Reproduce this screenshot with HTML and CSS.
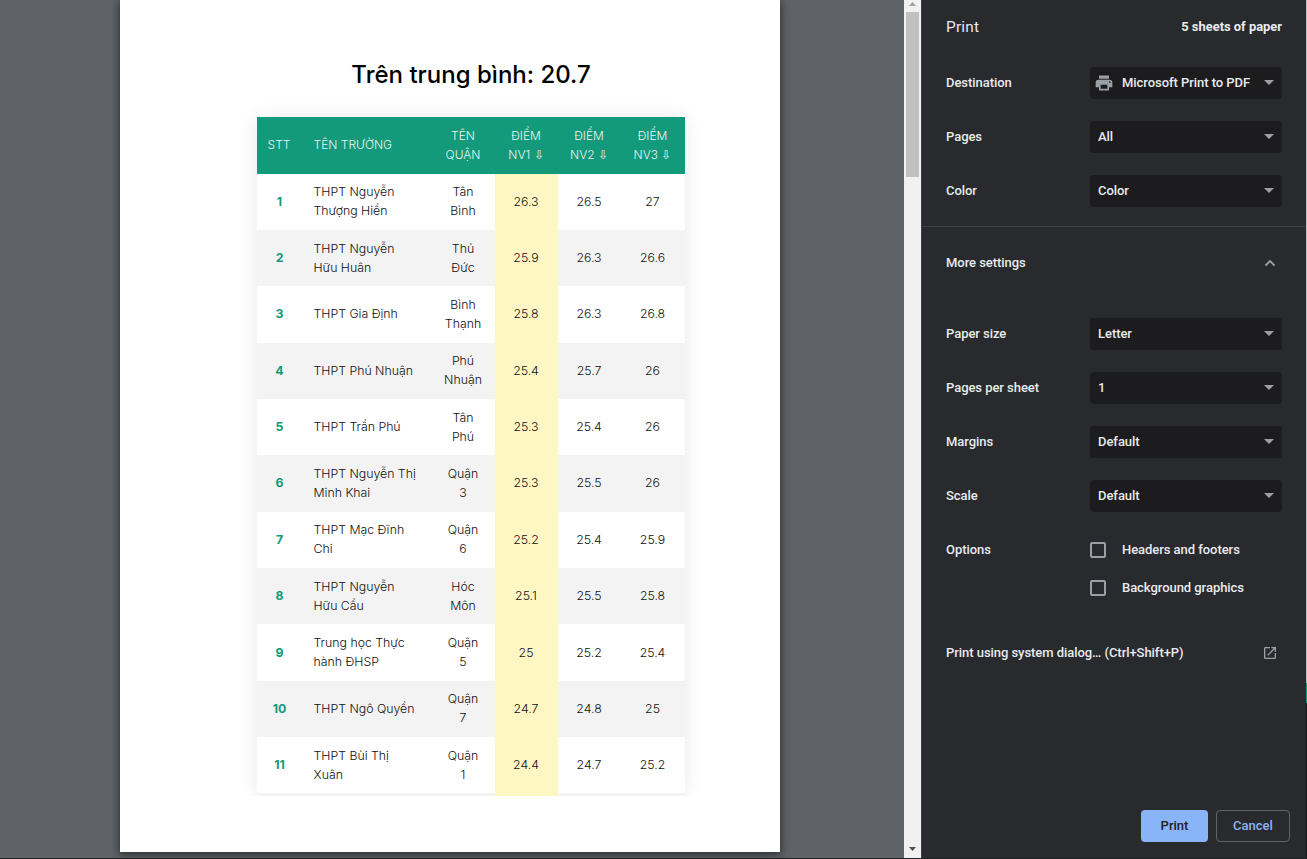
FILE: index.html
```html
<!DOCTYPE html>
<html lang="vi">
<head>
<meta charset="utf-8">
<title>Print</title>
<link rel="stylesheet" href="styles.css">
</head>
<body>
<div class="dialog">
  <main class="preview">
    <section class="paper">
      <h1 class="title">Trên trung bình: 20.7</h1>
      <div class="clip"><div class="table" id="table"></div></div>
    </section>
  </main>
  <div class="scrollbar">
    <svg class="arrow" width="17" height="11" viewBox="0 0 17 11"><path d="M5 6h7L8.500 2z" fill="#a3a3a3"/></svg>
    <div class="thumb"></div>
    <svg class="arrow down" width="17" height="17" viewBox="0 0 17 17"><path d="M5 6h7L8.500 10z" fill="#505050"/></svg>
  </div>
  <aside class="panel">
    <header class="head"><span class="head-title">Print</span><span class="sheets">5 sheets of paper</span></header>
    <div class="row"><span>Destination</span><div class="select dest"><svg width="20" height="20" viewBox="0 0 24 24"><path fill="#9aa0a6" d="M19 8H5c-1.660 0-3 1.340-3 3v6h4v4h12v-4h4v-6c0-1.660-1.340-3-3-3zm-3 11H8v-5h8v5zm3-7c-.55 0-1-.45-1-1s.45-1 1-1 1 .45 1 1-.45 1-1 1zm-1-9H6v4h12V3z"/></svg><span>Microsoft Print to PDF</span><i class="caret"></i></div></div>
    <div class="row"><span>Pages</span><div class="select"><span>All</span><i class="caret"></i></div></div>
    <div class="row"><span>Color</span><div class="select"><span>Color</span><i class="caret"></i></div></div>
    <div class="more"><span>More settings</span><svg width="24" height="24" viewBox="0 0 24 24"><path d="M7.500 14.500l4.500-4.500 4.500 4.500" fill="none" stroke="#9aa0a6" stroke-width="1.800"/></svg></div>
    <div class="row"><span>Paper size</span><div class="select"><span>Letter</span><i class="caret"></i></div></div>
    <div class="row"><span>Pages per sheet</span><div class="select"><span>1</span><i class="caret"></i></div></div>
    <div class="row"><span>Margins</span><div class="select"><span>Default</span><i class="caret"></i></div></div>
    <div class="row"><span>Scale</span><div class="select"><span>Default</span><i class="caret"></i></div></div>
    <div class="options"><span>Options</span><div class="checks">
      <label class="check"><i class="box"></i>Headers and footers</label>
      <label class="check"><i class="box"></i>Background graphics</label>
    </div></div>
    <div class="system"><span>Print using system dialog… (Ctrl+Shift+P)</span><svg width="16" height="16" viewBox="0 0 24 24"><path fill="#9aa0a6" d="M19 19H5V5h7V3H5c-1.110 0-2 .9-2 2v14c0 1.100.89 2 2 2h14c1.100 0 2-.9 2-2v-7h-2v7zM14 3v2h3.590l-9.830 9.830 1.410 1.410L19 6.410V10h2V3h-7z"/></svg></div>
    <footer class="actions"><button class="btn primary">Print</button><button class="btn">Cancel</button></footer>
  </aside>
  <div class="edge"><div class="edge-light"></div><div class="edge-green"></div></div>
</div>
<script src="table.js"></script>
</body>
</html>
```
FILE: styles.css
```css
* { box-sizing: border-box; }
body { margin: 0; height: 859px; overflow: hidden; background: #292a2d; }
.dialog { display: flex; height: 859px; border-bottom: 1px solid #202124; font: 500 13px/20px Roboto, sans-serif; letter-spacing: -0.05px; color: #e8eaed; }
.preview { width: 904px; padding-left: 120px; background: #5f6368; overflow: hidden; }
.paper { width: 660px; height: 852px; padding-top: 58px; background: #fff; color: #111; box-shadow: 0 2px 8px 1px rgba(32, 33, 36, .8); font-family: Inter, "Noto Sans", sans-serif; letter-spacing: 0; }
.title { margin: 0 0 25px; padding-left: 42px; text-align: center; font-size: 24px; line-height: 34px; font-weight: 500; color: #000; white-space: nowrap; }
.clip { margin-left: 137px; width: 428px; height: 679px; clip-path: inset(-25px -20px 0); }
.table { height: 679px; background: #f3f3f3; box-shadow: 0 0 18px rgba(0, 0, 0, .09); font-weight: 300; font-size: 12.3px; line-height: 19px; }
.tr { display: grid; grid-template-columns: 45px 130px 63px 63px 63px 64px; height: 56.36px; }
.tr:nth-child(even) { background: #fff; }
.tr.th { height: 56.5px; background: #129a7a; color: #e9f5f2; }
.td { display: flex; align-items: center; justify-content: center; text-align: center; white-space: nowrap; padding: 0 1px 1px 0; }
.th .td { font-size: 12px; }
.td.name { justify-content: flex-start; text-align: left; padding-left: 11.5px; }
.td.num { font-weight: 700; color: #129a7a; padding-right: 0; }
.td.hot { background: #fff7c3; }
.tail { display: grid; grid-template-columns: 238px 63px; height: 3px; }
.tail .td { grid-column: 2; }
.scrollbar { width: 17px; display: flex; flex-direction: column; background: #f1f1f1; }
.arrow { display: block; flex: none; }
.thumb { width: 13px; height: 165px; margin: 1px 0 0 2px; background: #c1c1c1; }
.down { margin-top: auto; }
.panel { width: 385px; border-left: 1px solid #3c4043; background: #292a2d; display: flex; flex-direction: column; }
.head { display: flex; justify-content: space-between; align-items: center; height: 56px; padding: 0 24px 2px; }
.head-title { font-size: 15.4px; font-weight: 400; letter-spacing: .2px; }
.sheets { font-weight: 700; font-size: 12.9px; letter-spacing: 0; }
.row { display: flex; align-items: center; justify-content: space-between; height: 54px; padding: 0 24px; }
.select { display: flex; align-items: center; width: 192px; height: 32px; padding: 0 8px; border-radius: 4px; background: #1c1c1e; white-space: nowrap; }
.dest { padding-left: 4px; }
.dest svg { margin-right: 8px; }
.caret { margin: 0 0 1px auto; border: 5px solid transparent; border-top-color: #9aa0a6; border-bottom: 0; }
.more { display: flex; align-items: center; justify-content: space-between; height: 73px; margin: 8px 0; padding: 0 24px; border-top: 1px solid #3c4043; }
.options { display: flex; padding: 17px 24px 0; }
.options > span { width: 144px; }
.checks { display: flex; flex-direction: column; gap: 18px; }
.check { display: flex; align-items: center; gap: 16px; }
.box { width: 16px; height: 16px; border: 2px solid #9aa0a6; border-radius: 2px; }
.system { display: flex; align-items: center; justify-content: space-between; margin-top: 45px; padding: 0 28px 0 24px; }
.system svg { margin-bottom: 1px; }
.actions { display: flex; justify-content: flex-end; gap: 8px; margin-top: auto; padding: 0 16px 16px; }
.btn { width: 74px; height: 32px; padding: 0 0 2px; border: 1px solid #5f6368; border-radius: 4px; background: transparent; color: #8ab4f8; font: 500 13px Roboto, sans-serif; }
.btn.primary { width: 67px; border: 0; background: #8ab4f8; color: #202124; }
.edge { width: 1px; background: #151719; }
.edge-light { height: 683px; background: #b8babc; }
.edge-green { height: 20px; background: #129a7a; }
```
FILE: table.js
```js
const schools = [
  ["THPT Nguyễn<br>Thượng Hiền", "Tân<br>Bình", 26.3, 26.5, 27],
  ["THPT Nguyễn<br>Hữu Huân", "Thủ<br>Đức", 25.9, 26.3, 26.6],
  ["THPT Gia Định", "Bình<br>Thạnh", 25.8, 26.3, 26.8],
  ["THPT Phú Nhuận", "Phú<br>Nhuận", 25.4, 25.7, 26],
  ["THPT Trần Phú", "Tân<br>Phú", 25.3, 25.4, 26],
  ["THPT Nguyễn Thị<br>Minh Khai", "Quận<br>3", 25.3, 25.5, 26],
  ["THPT Mạc Đĩnh<br>Chi", "Quận<br>6", 25.2, 25.4, 25.9],
  ["THPT Nguyễn<br>Hữu Cầu", "Hóc<br>Môn", 25.1, 25.5, 25.8],
  ["Trung học Thực<br>hành ĐHSP", "Quận<br>5", 25, 25.2, 25.4],
  ["THPT Ngô Quyền", "Quận<br>7", 24.7, 24.8, 25],
  ["THPT Bùi Thị<br>Xuân", "Quận<br>1", 24.4, 24.7, 25.2]
];
const row = (cells, head) => `<div class="tr${head ? " th" : ""}">` + cells.map((c, i) =>
  `<div class="td${i === 1 ? " name" : ""}${!head && i === 0 ? " num" : ""}${!head && i === 3 ? " hot" : ""}"><span>${c}</span></div>`).join("") + "</div>";
document.getElementById("table").innerHTML =
  row(["STT", "TÊN TRƯỜNG", "TÊN<br>QUẬN", "ĐIỂM<br>NV1 ⇩", "ĐIỂM<br>NV2 ⇩", "ĐIỂM<br>NV3 ⇩"], true) +
  schools.map((s, i) => row([i + 1, ...s])).join("") +
  '<div class="tail"><div class="td hot"></div></div>';
```
